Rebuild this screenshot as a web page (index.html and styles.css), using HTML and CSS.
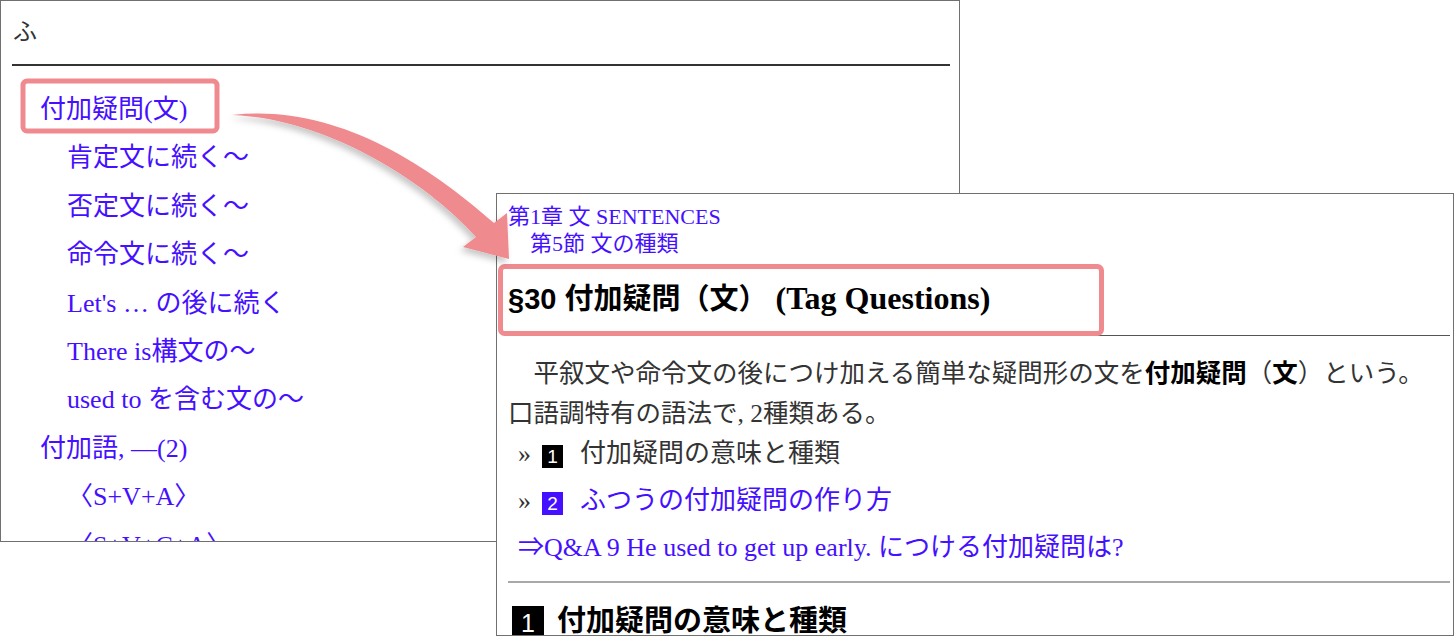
FILE: index.html
```html
<!DOCTYPE html>
<html lang="ja">
<head>
  <meta charset="UTF-8">
  <title>付加疑問(文)</title>
  <link rel="stylesheet" href="styles.css">
</head>
<body>
<div class="desk">

  <!-- Index window -->
  <section class="win win-index">
    <div class="index-head">ふ</div>
    <div class="index-rule"></div>
    <ul class="index-list">
      <li class="lv1"><a href="#">付加疑問(文)</a></li>
      <li class="lv2"><a href="#">肯定文に続く〜</a></li>
      <li class="lv2"><a href="#">否定文に続く〜</a></li>
      <li class="lv2"><a href="#">命令文に続く〜</a></li>
      <li class="lv2"><a href="#">Let's … の後に続く</a></li>
      <li class="lv2"><a href="#">There is構文の〜</a></li>
      <li class="lv2"><a href="#">used to を含む文の〜</a></li>
      <li class="lv1"><a href="#">付加語, —(2)</a></li>
      <li class="lv2"><a href="#">〈S+V+A〉</a></li>
      <li class="lv2"><a href="#">〈S+V+C+A〉</a></li>
    </ul>
  </section>

  <!-- Article window -->
  <section class="win win-page">
    <div class="crumb">
      <a href="#">第1章 文 SENTENCES</a>
      <a href="#" class="sub">第5節 文の種類</a>
    </div>
    <h1 class="sec-title">§30 付加疑問（文） <span class="en">(Tag Questions)</span></h1>
    <p class="lead">平叙文や命令文の後につけ加える簡単な疑問形の文を<b>付加疑問</b>（<b>文</b>）という。<br>口語調特有の語法で, 2種類ある。</p>
    <ul class="toc">
      <li>»<span class="num">1</span>付加疑問の意味と種類</li>
      <li>»<a href="#"><span class="num num-link">2</span>ふつうの付加疑問の作り方</a></li>
      <li><a href="#">⇒Q&amp;A 9 He used to get up early. につける付加疑問は?</a></li>
    </ul>
    <hr class="split">
    <h2 class="sub-title"><span class="num-big">1</span>付加疑問の意味と種類</h2>
  </section>

  <!-- Annotation layer: highlight boxes and arrow -->
  <svg class="marks" width="1456" height="636" viewBox="0 0 1456 636">
    <defs>
      <filter id="soft" x="-20%" y="-20%" width="140%" height="140%">
        <feDropShadow dx="-3" dy="4" stdDeviation="3" flood-color="#000" flood-opacity="0.22"/>
      </filter>
    </defs>
    <rect x="23" y="81" width="194" height="50" rx="4"/>
    <rect x="500.5" y="266.5" width="601" height="67" rx="4"/>
    <path class="arrow" filter="url(#soft)"
          d="M232 115 C330 104 420 158 494 223 L507 213 L509 259 L463 247 L476 237 C420 175 320 118 232 115 Z"/>
  </svg>

</div>
</body>
</html>
```

FILE: styles.css
```css
/* Page reset */
body {
  margin: 0;
  background: #fff;
  font-family: "Liberation Serif", "Noto Sans CJK JP", serif;
  color: #333;
}

a {
  color: #4510ff;
  text-decoration: none;
}

/* Canvas holding both windows */
.desk {
  position: relative;
  width: 1456px;
  height: 636px;
  overflow: hidden;
}

.win {
  position: absolute;
  box-sizing: border-box;
  border: 1px solid #707070;
  background: #fff;
  overflow: hidden;
}

/* Index window */
.win-index {
  left: 0;
  top: 0;
  width: 960px;
  height: 542px;
}
.index-head {
  padding: 12px 12px 0;
  font-size: 24px;
  line-height: 38px;
  color: #333;
}
.index-rule {
  margin: 13px 9px 0 11px;
  border-top: 2px solid #333;
}
.index-list {
  list-style: none;
  margin: 20px 0 0;
  padding: 0;
  font-size: 26px;
  line-height: 48.4px;
  white-space: nowrap;
}
.index-list .lv1 {
  padding-left: 39px;
}
.index-list .lv2 {
  padding-left: 66px;
}

/* Article window */
.win-page {
  left: 496px;
  top: 193px;
  width: 958px;
  height: 443px;
  padding: 9px 3px 0 11px;
}
.crumb {
  font-size: 22px;
  line-height: 27px;
}
.crumb a {
  display: block;
}
.crumb .sub {
  padding-left: 22px;
}

.sec-title {
  margin: 22px 0 0;
  padding-bottom: 16px;
  border-bottom: 1px solid #555;
  font-family: "Liberation Sans", "Noto Sans CJK JP", sans-serif;
  font-size: 29px;
  line-height: 40px;
  font-weight: bold;
  color: #000;
}
.sec-title .en {
  font-family: "Liberation Serif", serif;
  font-size: 32px;
  line-height: 1;
}

.lead {
  margin: 15px 0 0;
  font-size: 25.5px;
  line-height: 40px;
  text-indent: 1em;
  color: #333;
}
.lead b {
  font-family: "Noto Sans CJK JP", sans-serif;
  color: #000;
}

.toc {
  list-style: none;
  margin: 0;
  padding: 0 0 0 10px;
  font-size: 26px;
  line-height: 40px;
  white-space: nowrap;
}
.toc li + li {
  margin-top: 7px;
}
.num {
  display: inline-block;
  width: 21px;
  height: 23px;
  margin: 0 17px 0 11px;
  background: #000;
  color: #fff;
  font: 19px/23px "Liberation Sans", sans-serif;
  text-align: center;
  vertical-align: middle;
}
.num-link {
  background: #4510ff;
}

.split {
  margin: 13px 0 0;
  height: 0;
  border: 0;
  border-top: 2px solid #a8a8a8;
}

.sub-title {
  display: flex;
  align-items: flex-start;
  margin: 23px 0 0;
  padding-left: 4px;
  font-family: "Noto Sans CJK JP", sans-serif;
  font-size: 29px;
  line-height: 24px;
  font-weight: bold;
  color: #000;
}
.num-big {
  width: 32px;
  height: 34px;
  margin-right: 13px;
  background: #000;
  color: #fff;
  font: normal 25px/34px "Liberation Sans", sans-serif;
  text-align: center;
}

/* Annotation layer */
.marks {
  position: absolute;
  left: 0;
  top: 0;
  pointer-events: none;
}
.marks rect {
  fill: none;
  stroke: #ef8a8f;
  stroke-width: 5;
}
.marks .arrow {
  fill: #ef8a8f;
}
```
